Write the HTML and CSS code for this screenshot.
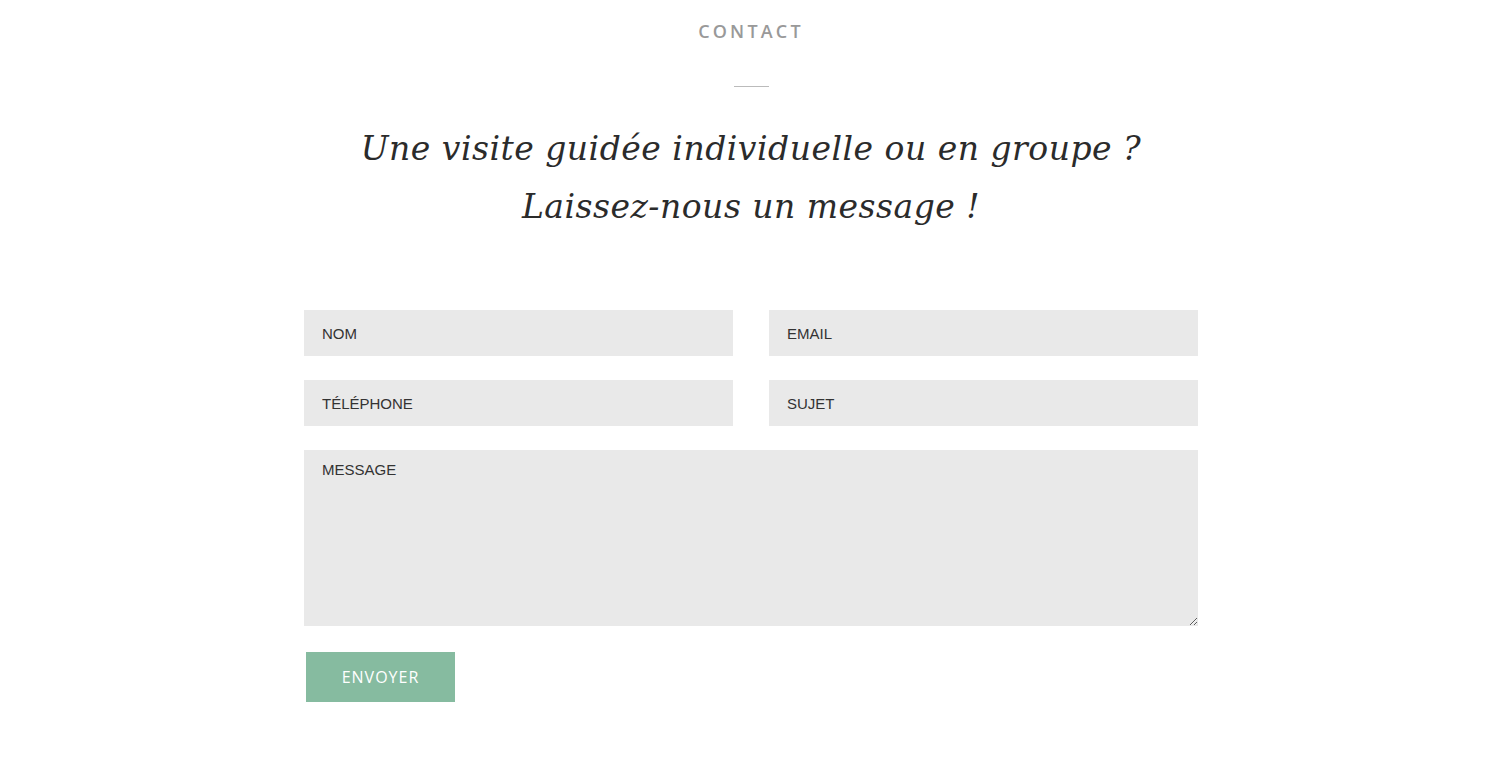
FILE: index.html
```html
<!DOCTYPE html>
<html lang="fr">
<head>
<meta charset="utf-8">
<title>Contact</title>
<link rel="stylesheet" href="styles.css">
</head>
<body>
<section class="contact">
  <h2 class="eyebrow">CONTACT</h2>
  <div class="divider"></div>
  <h1 class="title">Une visite guidée individuelle ou en groupe ?<br>Laissez-nous un message !</h1>
  <form class="form">
    <div class="row">
      <input class="field" type="text" placeholder="NOM">
      <input class="field" type="email" placeholder="EMAIL">
    </div>
    <div class="row">
      <input class="field" type="tel" placeholder="TÉLÉPHONE">
      <input class="field" type="text" placeholder="SUJET">
    </div>
    <textarea class="field message" placeholder="MESSAGE"></textarea>
    <div class="actions">
      <button class="send" type="button">ENVOYER</button>
    </div>
  </form>
</section>
</body>
</html>
```
FILE: styles.css
```css
html, body {
  margin: 0;
  padding: 0;
  background: #fff;
}
.contact {
  display: flex;
  flex-direction: column;
  align-items: center;
  padding-top: 20px;
  padding-left: 2px;
}
.eyebrow {
  margin: 0;
  font-family: "Open Sans", "Liberation Sans", sans-serif;
  font-weight: 600;
  font-size: 18px;
  letter-spacing: 3.2px;
  color: #999;
  line-height: 22px;
}
.divider {
  width: 35px;
  height: 1px;
  background: #bbb;
  margin-top: 44px;
}
.title {
  margin: 33px 0 0;
  font-family: "DejaVu Serif", "Liberation Serif", serif;
  font-style: italic;
  font-weight: normal;
  font-size: 33px;
  line-height: 58px;
  letter-spacing: 0.5px;
  color: #2b2b2b;
  text-align: center;
}
.form {
  width: 894px;
  margin-top: 74px;
  display: flex;
  flex-direction: column;
  gap: 24px;
}
.row {
  display: flex;
  gap: 36px;
}
.field {
  flex: 1;
  box-sizing: border-box;
  height: 46px;
  border: none;
  outline: none;
  background: #e9e9e9;
  padding: 0 18px;
  font-family: "Liberation Sans", Arial, sans-serif;
  font-size: 15px;
  color: #333;
  margin: 0;
}
.field::placeholder {
  color: #333;
  opacity: 1;
}
.message {
  flex: none;
  height: 176px;
  padding: 11px 18px;
  resize: vertical;
  display: block;
  width: 100%;
}
.actions {
  display: flex;
  padding-left: 2px;
  margin-top: 2px;
}
.send {
  width: 149px;
  height: 50px;
  border: none;
  background: #86bba0;
  color: #fff;
  font-family: "Open Sans", "Liberation Sans", sans-serif;
  font-size: 16px;
  letter-spacing: 1px;
  cursor: pointer;
}
```
